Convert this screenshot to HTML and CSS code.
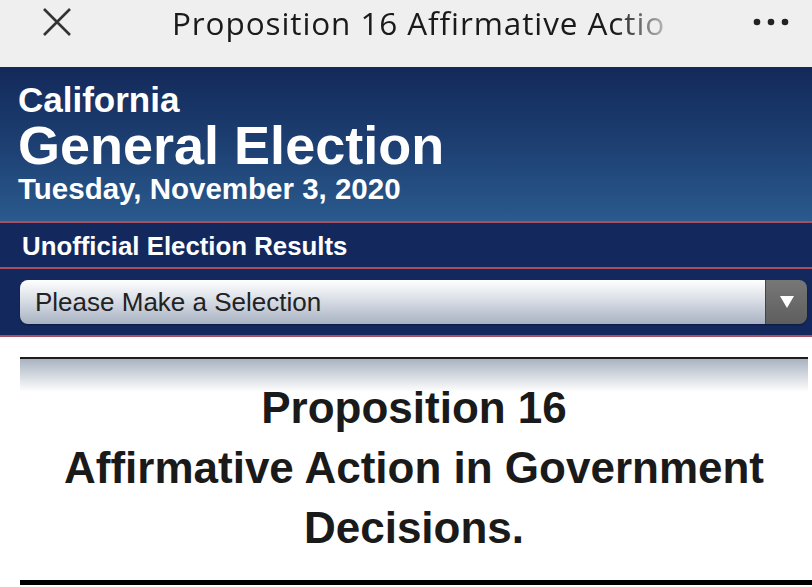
FILE: index.html
```html
<!DOCTYPE html>
<html>
<head>
<meta charset="utf-8">
<link rel="stylesheet" href="styles.css">
</head>
<body>
<div class="topbar">
  <svg class="close" width="30" height="30" viewBox="0 0 30 30"><path d="M2 2 L28 28 M28 2 L2 28" stroke="#333" stroke-width="2.6" fill="none"/></svg>
  <div class="title">Proposition 16 Affirmative Actio</div>
  <svg class="more" width="40" height="10" viewBox="0 0 40 10"><circle cx="6" cy="5" r="3.3" fill="#222"/><circle cx="20" cy="5" r="3.3" fill="#222"/><circle cx="34" cy="5" r="3.3" fill="#222"/></svg>
</div>
<div class="header">
  <div class="state">California</div>
  <div class="election">General Election</div>
  <div class="date">Tuesday, November 3, 2020</div>
</div>
<div class="subbar">Unofficial Election Results</div>
<div class="selectbar">
  <div class="select">
    <span class="select-text">Please Make a Selection</span>
    <span class="select-btn"><svg width="14" height="12" viewBox="0 0 14 12"><path d="M0 0 H14 L7 12 Z" fill="#fff"/></svg></span>
  </div>
</div>
<div class="content">
  <div class="panel-top"></div>
  <h1 class="prop">Proposition 16<br>Affirmative Action in Government<br>Decisions.</h1>
  <div class="rule"></div>
</div>
</body>
</html>
```
FILE: styles.css
```css
html, body { margin: 0; padding: 0; }
body { background: #fff; font-family: "Liberation Sans", Arial, sans-serif; width: 812px; overflow: hidden; }
.topbar { height: 67px; background: #efefef; position: relative; }
.close { position: absolute; left: 42px; top: 7px; }
.title { position: absolute; left: 172px; top: 1px; white-space: nowrap; font-family: "Open Sans", "Liberation Sans", sans-serif; font-size: 31.5px; letter-spacing: 0.9px; color: #1a1a1a;
  -webkit-mask-image: linear-gradient(to right, #000 90%, rgba(0,0,0,0.25) 100%); mask-image: linear-gradient(to right, #000 90%, rgba(0,0,0,0.25) 100%); }
.more { position: absolute; left: 751px; top: 17px; }
.header { height: 156px; background: linear-gradient(to bottom, #13295a 0%, #1d3f72 50%, #2a5a8e 100%); color: #fff; padding-left: 18px; box-sizing: border-box; padding-top: 14px; font-weight: bold; border-bottom: 2px solid #a8505f; }
.state { font-size: 35px; line-height: 38px; }
.election { font-size: 54px; line-height: 53px; }
.date { font-size: 29.5px; line-height: 34px; }
.subbar { background: #13295e; height: 46px; box-sizing: border-box; color: #fff; font-weight: bold; font-size: 25.8px; padding-left: 22px; line-height: 46px; border-bottom: 2px solid #a8505f; }
.selectbar { background: #13295e; height: 68px; box-sizing: border-box; padding: 11px 5px 0 20px; border-bottom: 2px solid #a8505f; }
.select { height: 44px; border-radius: 8px; display: flex; overflow: hidden; box-shadow: 0 1px 2px rgba(0,0,0,0.4); }
.select-text { flex: 1; background: linear-gradient(to bottom, #ffffff 0%, #d9dee6 45%, #a8b2c2 100%); font-size: 26px; color: #222; line-height: 44px; padding-left: 15px; }
.select-btn { width: 41px; background: linear-gradient(to bottom, #777 0%, #5e5e5e 100%); display: flex; align-items: center; justify-content: center; border-left: 1px solid #444; }
.content { padding: 20px 4px 0 20px; }
.panel-top { height: 33px; border-top: 2px solid #1d1d1d; background: linear-gradient(to bottom, #a9b3c1 0%, #ffffff 100%); }
.prop { margin: -14px 0 0; text-align: center; font-size: 44px; line-height: 60px; color: #1a1a1a; font-weight: bold; }
.rule { height: 5px; background: #000; margin-top: 22px; margin-right: -4px; }
```
